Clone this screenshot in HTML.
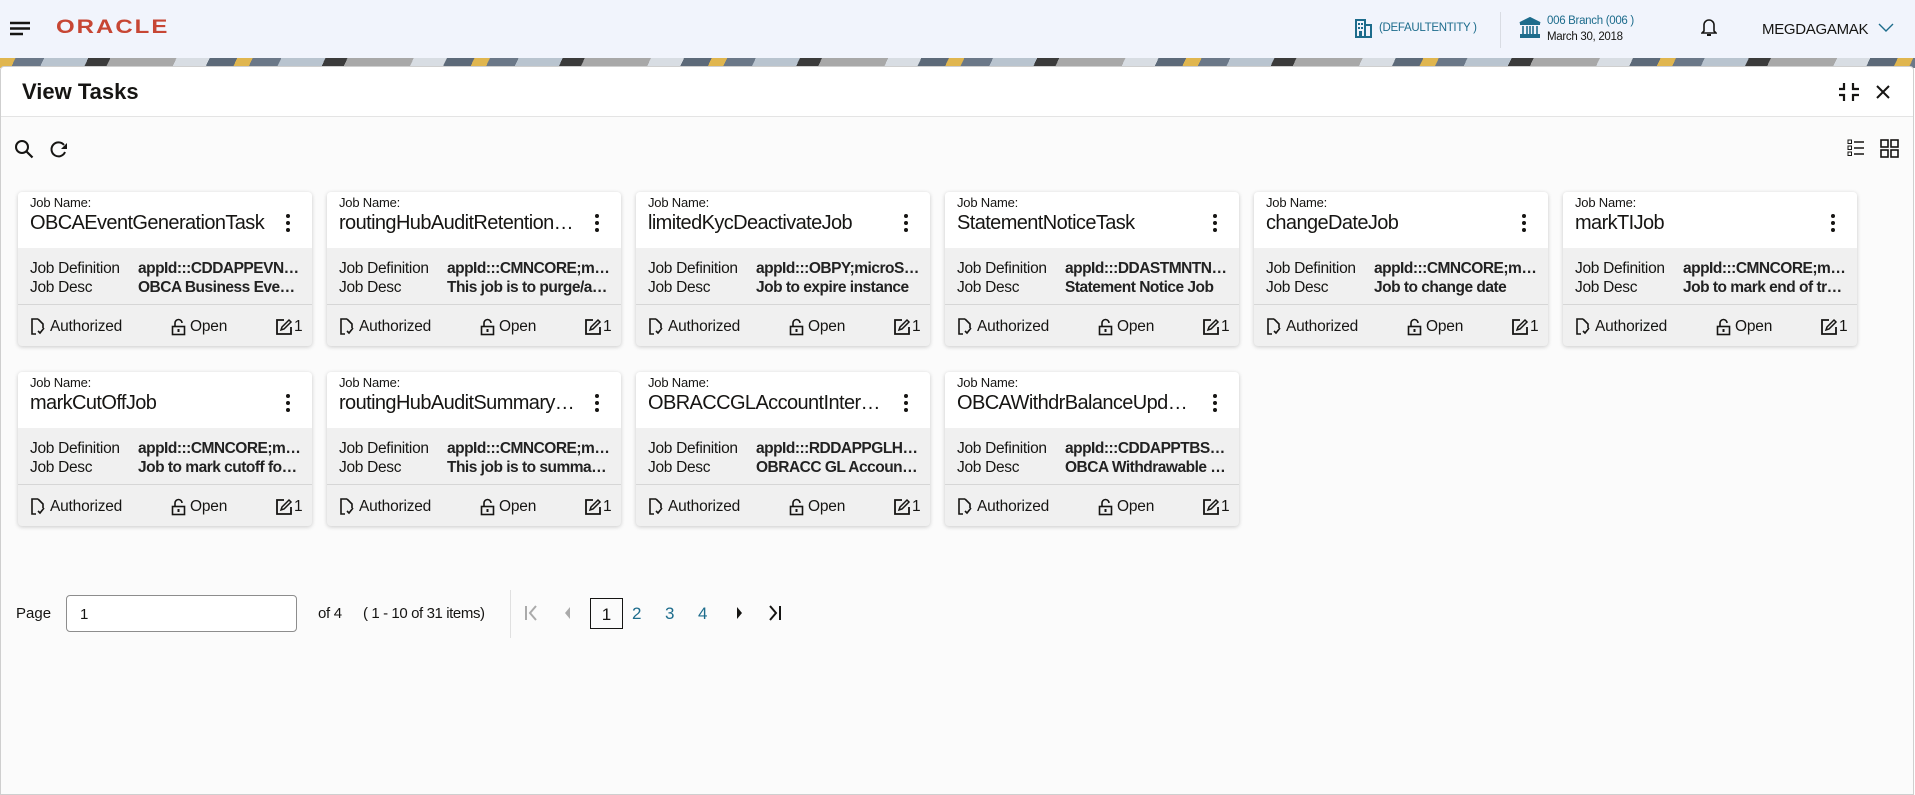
<!DOCTYPE html>
<html><head><meta charset="utf-8"><style>
*{box-sizing:border-box;margin:0;padding:0}
body{width:1915px;height:795px;overflow:hidden;font-family:"Liberation Sans",sans-serif;background:#fff;color:#161513;position:relative}
.hdr{position:absolute;left:0;top:0;width:1915px;height:58px;background:#f1f4fc}
.stripe{position:absolute;left:0;top:58px;width:1915px;height:10px;background:repeating-linear-gradient(115deg,#e0b64f 0 14px,#6b7888 14px 40px,#b9c4cf 40px 80px,#3b3b3b 80px 100px,#a8a8a8 100px 160px,#d8dde3 160px 190px,#5d6a79 190px 215px)}
.panel{position:absolute;left:0;top:66px;width:1914px;height:729px;background:#fbfbfb;border:1px solid #cfcfcf;border-radius:4px 4px 0 0}
.ttl{position:absolute;left:0;top:0;width:100%;height:50px;background:#fff;border-bottom:1px solid #e4e4e4;border-radius:4px 4px 0 0}
.ttl b{position:absolute;left:21px;top:12px;font-size:22px}
.card{position:absolute;width:294px;height:154px;background:#f0f0f0;border-radius:4px;box-shadow:0 1px 4px rgba(0,0,0,.2);overflow:hidden}
.card .top{height:56px;background:#fff;position:relative}
.card .jl{position:absolute;left:12px;top:3px;font-size:13px;letter-spacing:-.2px}
.card .jn{position:absolute;left:12px;top:20px;width:240px;font-size:20px;letter-spacing:-.6px;white-space:nowrap;overflow:hidden;text-overflow:ellipsis}
.card .kb{position:absolute;left:268px;top:22px;width:4px}
.card .kb i{display:block;width:4px;height:4px;border-radius:2px;background:#161513;margin-bottom:3px}
.card .mid{height:57px;position:relative;border-bottom:1px solid #d6d6d6;font-size:15.5px;letter-spacing:-.3px}
.card .r{position:absolute;left:12px;white-space:nowrap}
.card .v{position:absolute;left:120px;width:164px;white-space:nowrap;overflow:hidden;text-overflow:ellipsis;font-weight:bold;color:#222;letter-spacing:-.5px}
.card .ft{position:relative;height:41px;font-size:15.5px;letter-spacing:-.2px}
.card .ft span{position:absolute;top:13px}
.card .ft svg{position:absolute;top:13px}
.teal{color:#1d6c8c}
</style></head><body>
<div class="hdr">
<svg style="position:absolute;left:10px;top:21px" width="22" height="15"><path d="M0 2h20M0 7.5h20M0 13h13" stroke="#161513" stroke-width="2.4"/></svg>
<div style="position:absolute;left:56px;top:16px;font-size:24px;font-weight:bold;color:#c74634;letter-spacing:2px;transform:scaleY(.8);transform-origin:top left">ORACLE</div>
<svg style="position:absolute;left:1355px;top:19px" width="17" height="19"><path d="M1 18V1h9v17M10 6h6v12M0 18h17" stroke="#1d6c8c" stroke-width="2" fill="none"/><rect x="3" y="4" width="2" height="2" fill="#1d6c8c"/><rect x="6" y="4" width="2" height="2" fill="#1d6c8c"/><rect x="3" y="8" width="2" height="2" fill="#1d6c8c"/><rect x="6" y="8" width="2" height="2" fill="#1d6c8c"/><rect x="4" y="12" width="3" height="6" fill="#1d6c8c"/></svg>
<div class="teal" style="position:absolute;left:1379px;top:22px;font-size:11.5px;letter-spacing:-.3px">(DEFAULTENTITY )</div>
<div style="position:absolute;left:1500px;top:12px;width:1px;height:36px;background:#d9dce3"></div>
<svg style="position:absolute;left:1519px;top:17px" width="22" height="22"><path d="M1 6L11 1l10 5zM1 7h20M1 20h20M1 18h20" stroke="#1d6c8c" stroke-width="2" fill="#1d6c8c"/><path d="M4 9v8M8 9v8M11 9v8M14 9v8M18 9v8" stroke="#1d6c8c" stroke-width="1.6"/></svg>
<div class="teal" style="position:absolute;left:1547px;top:15px;font-size:11.5px;letter-spacing:-.3px">006 Branch (006 )</div>
<div style="position:absolute;left:1547px;top:31px;font-size:11.5px;letter-spacing:-.3px">March 30, 2018</div>
<svg style="position:absolute;left:1701px;top:17px" width="16" height="20"><path d="M3 14V8a5 5 0 0 1 10 0v6l2 2H1z" stroke="#161513" stroke-width="1.6" fill="none"/><path d="M6 18h4" stroke="#161513" stroke-width="2"/></svg>
<div style="position:absolute;left:1762px;top:21px;font-size:15px;letter-spacing:-.3px">MEGDAGAMAK</div>
<svg style="position:absolute;left:1878px;top:23px" width="16" height="10"><path d="M1 1l7 7 7-7" stroke="#1d6c8c" stroke-width="1.4" fill="none"/></svg>
</div>
<div class="stripe"></div>
<div class="panel">
<div class="ttl"><b>View Tasks</b>
<svg style="position:absolute;left:1837px;top:15px" width="22" height="20"><path d="M6 1v6H1M15 1v6h6M6 19v-6H1M15 19v-6h6" stroke="#161513" stroke-width="2.2" fill="none"/></svg>
<svg style="position:absolute;left:1874px;top:17px" width="16" height="16"><path d="M2 2l12 12M14 2L2 14" stroke="#161513" stroke-width="2"/></svg>
</div>
<svg style="position:absolute;left:13px;top:72px" width="22" height="22"><circle cx="8" cy="8" r="6" stroke="#161513" stroke-width="2" fill="none"/><path d="M12.5 12.5l6 6" stroke="#161513" stroke-width="2.2"/></svg>
<svg style="position:absolute;left:48px;top:73px" width="20" height="20"><path d="M15 5A7 7 0 1 0 16 12" stroke="#161513" stroke-width="2" fill="none"/><path d="M12 9h6V3z" fill="#161513"/></svg>
<svg style="position:absolute;left:1846px;top:72px" width="18" height="18"><rect x="1" y="1" width="3.5" height="3.5" stroke="#161513" fill="none"/><rect x="1" y="7" width="3.5" height="3.5" stroke="#161513" fill="none"/><rect x="1" y="13" width="3.5" height="3.5" stroke="#161513" fill="none"/><path d="M7 3h10M7 9h10M7 15h10" stroke="#161513" stroke-width="1.6"/></svg>
<svg style="position:absolute;left:1879px;top:72px" width="19" height="19"><rect x="1" y="1" width="7" height="7" stroke="#161513" stroke-width="1.6" fill="none"/><rect x="11" y="1" width="7" height="7" stroke="#161513" stroke-width="1.6" fill="none"/><rect x="1" y="11" width="7" height="7" stroke="#161513" stroke-width="1.6" fill="none"/><rect x="11" y="11" width="7" height="7" stroke="#161513" stroke-width="1.6" fill="none"/></svg>
</div>

<div id="cards"></div>

<div style="position:absolute;left:16px;top:605px;font-size:15px">Page</div>
<div style="position:absolute;left:66px;top:595px;width:231px;height:37px;border:1px solid #8d8d8d;border-radius:4px;background:#fff;font-size:15px;padding:10px 0 0 13px">1</div>
<div style="position:absolute;left:318px;top:605px;font-size:15px;letter-spacing:-.3px">of 4</div>
<div style="position:absolute;left:363px;top:605px;font-size:15px;letter-spacing:-.4px">( 1 - 10 of 31 items)</div>
<div style="position:absolute;left:510px;top:590px;width:1px;height:48px;background:#e0e0e0"></div>
<svg style="position:absolute;left:524px;top:605px" width="16" height="16"><path d="M2 1v14" stroke="#aaa" stroke-width="2"/><path d="M12 1L6 8l6 7" stroke="#aaa" stroke-width="2" fill="none"/></svg>
<svg style="position:absolute;left:563px;top:606px" width="10" height="14"><path d="M7 1L2 7l5 6z" fill="#aaa"/></svg>
<div style="position:absolute;left:590px;top:598px;width:33px;height:31px;border:1.5px solid #161513;font-size:17px;text-align:center;padding-top:6px">1</div>
<div class="teal" style="position:absolute;left:632px;top:604px;font-size:17px">2</div>
<div class="teal" style="position:absolute;left:665px;top:604px;font-size:17px">3</div>
<div class="teal" style="position:absolute;left:698px;top:604px;font-size:17px">4</div>
<svg style="position:absolute;left:735px;top:606px" width="10" height="14"><path d="M2 1l5 6-5 6z" fill="#161513"/></svg>
<svg style="position:absolute;left:767px;top:605px" width="16" height="16"><path d="M3 1l6 7-6 7" stroke="#161513" stroke-width="2" fill="none"/><path d="M13 1v14" stroke="#161513" stroke-width="2"/></svg>

<script>
var d=[["OBCAEventGenerationTask","appId:::CDDAPPEVNTGEN;microService","OBCA Business Event Generation"],
["routingHubAuditRetentionJob","appId:::CMNCORE;microService","This job is to purge/archive"],
["limitedKycDeactivateJob","appId:::OBPY;microService","Job to expire instance"],
["StatementNoticeTask","appId:::DDASTMNTNOTICE","Statement Notice Job"],
["changeDateJob","appId:::CMNCORE;microService","Job to change date"],
["markTIJob","appId:::CMNCORE;microService","Job to mark end of transaction"],
["markCutOffJob","appId:::CMNCORE;microService","Job to mark cutoff for the day"],
["routingHubAuditSummaryJob","appId:::CMNCORE;microService","This job is to summarize"],
["OBRACCGLAccountIntermediary","appId:::RDDAPPGLHIST","OBRACC GL Account Intermediary"],
["OBCAWithdrBalanceUpdateJob","appId:::CDDAPPTBSYNC","OBCA Withdrawable Balance"]];
var h="";
d.forEach(function(c,i){var x=18+309*(i%6),y=i<6?192:372;
h+='<div class="card" style="left:'+x+'px;top:'+y+'px"><div class="top"><div class="jl">Job Name:</div><div class="jn">'+c[0]+'</div><div class="kb"><i></i><i></i><i></i></div></div>'+
'<div class="mid"><div class="r" style="top:12px">Job Definition</div><div class="v" style="top:12px">'+c[1]+'</div><div class="r" style="top:31px">Job Desc</div><div class="v" style="top:31px">'+c[2]+'</div></div>'+
'<div class="ft"><svg style="left:12px" width="16" height="18"><path d="M8 1H2v15h4M8 1l5 5v4" stroke="#161513" stroke-width="1.6" fill="none"/><path d="M8 13l2 2 4-5" stroke="#161513" stroke-width="1.6" fill="none"/></svg><span style="left:32px">Authorized</span>'+
'<svg style="left:153px" width="15" height="18"><path d="M4 8V5a3.5 3.5 0 0 1 7 0" stroke="#161513" stroke-width="1.6" fill="none"/><rect x="1.5" y="8.5" width="12" height="8" stroke="#161513" stroke-width="1.6" fill="none"/><rect x="6.5" y="11" width="2" height="3" fill="#161513"/></svg><span style="left:172px">Open</span>'+
'<svg style="left:257px" width="18" height="18"><path d="M9 2H2v14h14V9" stroke="#161513" stroke-width="1.8" fill="none"/><path d="M6 12l1-3 7-7 2 2-7 7z" stroke="#161513" stroke-width="1.5" fill="none"/></svg><span style="left:276px">1</span></div></div>';});
document.getElementById("cards").innerHTML=h;
</script>
</body></html>
